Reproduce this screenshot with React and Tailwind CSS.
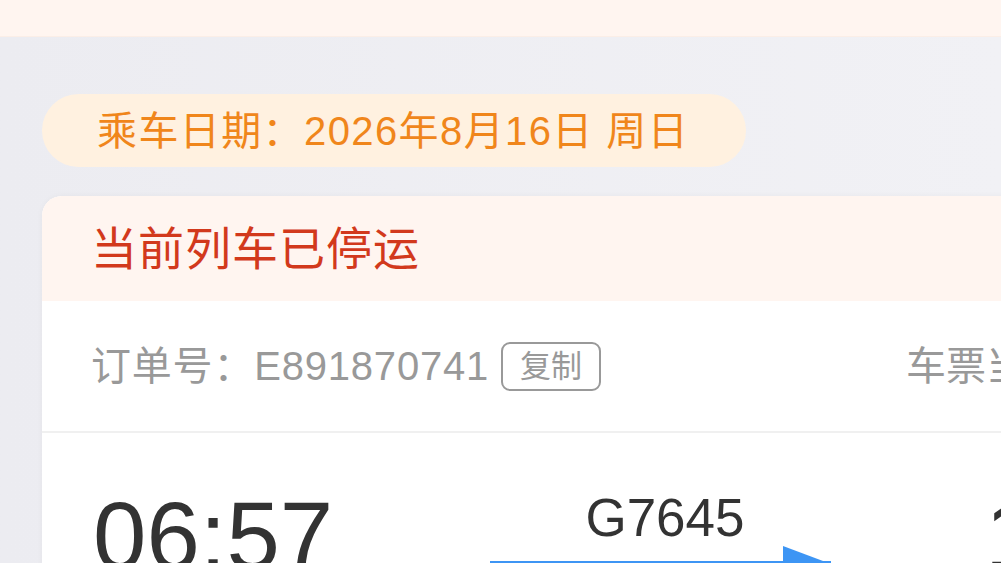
import React from 'react';

const font = "font-['Liberation_Sans','Noto_Sans_CJK_SC',sans-serif]";

function Arrow() {
  return (
    <svg width="350" height="24" viewBox="0 0 350 24" className="block">
      <rect x="0" y="17" width="341" height="3" fill="#3d95f4" />
      <polygon points="293,2 341,20 293,20" fill="#3d95f4" />
    </svg>
  );
}

export default function App() {
  return (
    <div className={`w-[1001px] h-[563px] overflow-hidden bg-gradient-to-r from-[#ececf1] to-[#f1f1f5] ${font}`}>
      <div className="h-[37px] bg-[#fff5f0] border-b border-[#fbeee7]" />

      <div className="px-[42px] pt-[57px]">
        <div className="h-[73px] w-[704px] rounded-full bg-[#fff1e0] pl-[55px] flex items-center text-[40px] leading-none tracking-[1.4px] text-[#f0861b]">
          乘车日期：2026年8月16日 周日
        </div>

        <div className="mt-[29px] w-[1160px] rounded-t-[20px] bg-white overflow-hidden shadow-[0_0_6px_rgba(0,0,0,0.04)]">
          <div className="h-[105px] bg-[#fff5f0] pl-[49px] flex items-center text-[46px] leading-none tracking-[1px] text-[#d2391c]">
            当前列车已停运
          </div>

          <div className="h-[130px] pl-[49px] flex items-center text-[40px] leading-none text-[#999999]">
            <div className="w-[815px] shrink-0 flex items-center">
              <span className="tracking-[0.8px]">订单号：E891870741</span>
              <span className="ml-[12px] h-[49px] px-[17px] flex items-center rounded-[9px] border-2 border-[#999999] text-[31px]">
                复制
              </span>
            </div>
            <span className="whitespace-nowrap">车票当前状态</span>
          </div>

          <div className="h-[2px] bg-[#f0f0f0]" />

          <div className="pl-[51px] pt-[55px] flex items-start text-[#333333]">
            <div className="w-[397px] shrink-0 text-[96px] leading-none">06:57</div>
            <div className="w-[350px] shrink-0 mt-[3px] flex flex-col items-center">
              <div className="text-[53px] leading-none">G7645</div>
              <Arrow />
            </div>
            <div className="ml-[145px] text-[96px] leading-none whitespace-nowrap">11:32</div>
          </div>
        </div>
      </div>
    </div>
  );
}
